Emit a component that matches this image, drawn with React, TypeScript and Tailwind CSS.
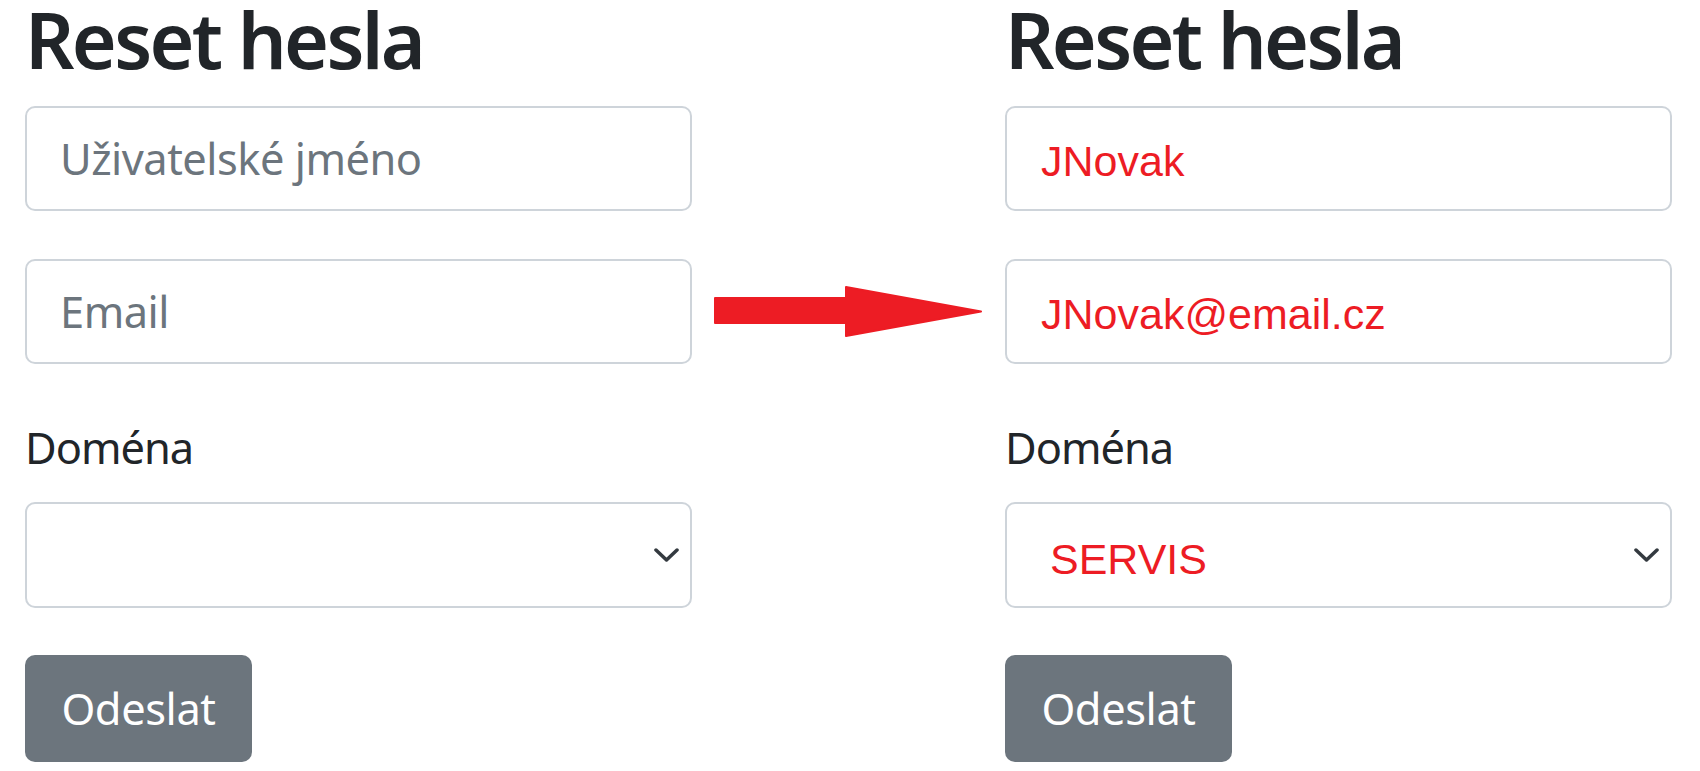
import React from "react";

const sans = "font-['Noto_Sans','Open_Sans',sans-serif]";

function Chevron() {
  return (
    <svg width="25" height="14" viewBox="0 0 25 14" fill="none" aria-hidden="true">
      <path d="M2 2 L12.5 12 L23 2" stroke="#343a40" strokeWidth="3.5" strokeLinecap="round" strokeLinejoin="round" />
    </svg>
  );
}

type ColProps = {
  filled: boolean;
};

function Column({ filled }: ColProps) {
  const inputBase =
    "w-full h-[105px] border-2 border-[#ced4da] rounded-[10px] bg-white outline-none box-border";
  const inputClass = filled
    ? `${inputBase} pl-[34px] pt-[5px] font-['Liberation_Sans',Arial,sans-serif] text-[43px] text-[#ed1c24]`
    : `${inputBase} pl-[33px] ${sans} text-[43.4px] tracking-[-0.5px] text-[#212529] placeholder:text-[#6c757d]`;

  return (
    <div className="flex flex-col w-[667px] shrink-0 pt-[2px]">
      <h1 className={`${sans} h-[76px] text-[77px] leading-[76px] font-semibold tracking-[-2.7px] text-[#212529] whitespace-nowrap`}>
        Reset hesla
      </h1>
      <input
        readOnly
        className={`mt-[28px] ${inputClass}`}
        placeholder="Uživatelské jméno"
        value={filled ? "JNovak" : ""}
      />
      <input
        readOnly
        className={`mt-[48px] ${inputClass}`}
        placeholder="Email"
        value={filled ? "JNovak@email.cz" : ""}
      />
      <label className={`${sans} mt-[54px] text-[43.4px] leading-[59px] tracking-[-1px] text-[#212529]`}>
        Doména
      </label>
      <div
        role="combobox"
        className={`mt-[25px] h-[106px] w-full border-2 border-[#ced4da] rounded-[10px] bg-white flex items-center ${
          filled ? "justify-between pl-[43px]" : "justify-end"
        } pr-[11px]`}
      >
        {filled && (
          <span className="block pt-[8px] leading-[48px] font-['Liberation_Sans',Arial,sans-serif] text-[43px] text-[#ed1c24]">
            SERVIS
          </span>
        )}
        <Chevron />
      </div>
      <button
        type="button"
        className={`${sans} mt-[47px] w-[227px] h-[107px] rounded-[10px] bg-[#6c757d] text-white text-[43.4px] leading-[59px] tracking-[-0.4px] flex items-center justify-center`}
      >
        Odeslat
      </button>
    </div>
  );
}

export default function App() {
  return (
    <div className="w-[1700px] h-[771px] bg-white overflow-hidden flex pl-[25px]">
      <Column filled={false} />
      <div className="w-[313px] shrink-0 pl-[22px] pt-[286px]">
        <svg width="268" height="51" viewBox="0 0 268 51" aria-hidden="true">
          <polygon
            points="1,12 132,12 132,1 267,25.5 132,50 132,37 1,37"
            fill="#ed1c24"
            stroke="#ed1c24"
            strokeWidth="2"
            strokeLinejoin="round"
          />
        </svg>
      </div>
      <Column filled={true} />
    </div>
  );
}
